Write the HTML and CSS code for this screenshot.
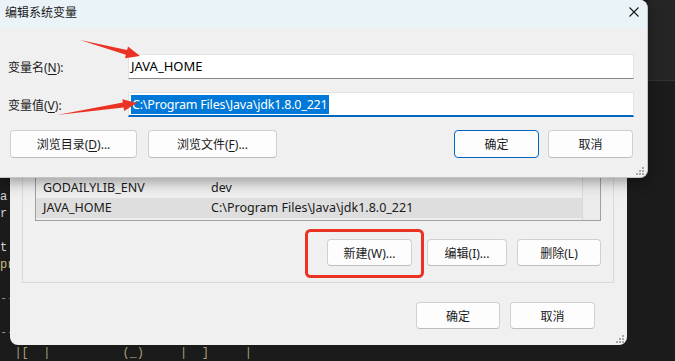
FILE: index.html
```html
<!DOCTYPE html>
<html lang="zh-CN">
<head>
    <meta charset="UTF-8">
    <title>编辑系统变量</title>
    <link rel="stylesheet" href="styles.css">
</head>
<body>
    <div class="desktop">
        <!-- terminal behind the dialogs -->
        <div class="terminal">
            <div class="term-lines">
                <div>a</div>
                <div>r</div>
                <div>&nbsp;</div>
                <div>t</div>
                <div class="yellow">pr</div>
                <div>&nbsp;</div>
                <div class="dim">----</div>
                <div>&nbsp;</div>
                <div class="dim">----</div>
            </div>
            <pre class="term-bottom">  |[  |          (_)     |  ]     |</pre>
        </div>
        <div class="side">
            <div class="side-tabs"></div>
        </div>

        <!-- environment variables window (behind) -->
        <section class="win env-win">
            <div class="group">
                <div class="list">
                    <div class="list-rows">
                        <div class="list-row"><span>GODAILYLIB_ENV</span><span>dev</span></div>
                        <div class="list-row selected"><span>JAVA_HOME</span><span>C:\Program Files\Java\jdk1.8.0_221</span></div>
                    </div>
                    <div class="scroll"></div>
                </div>
                <div class="btn-row">
                    <button class="btn btn-new">新建(W)...</button>
                    <button class="btn btn-edit">编辑(I)...</button>
                    <button class="btn btn-del">删除(L)</button>
                </div>
            </div>
            <div class="footer-row">
                <button class="btn btn-ok">确定</button>
                <button class="btn btn-cancel">取消</button>
            </div>
            <svg class="grip" width="8" height="8" viewBox="0 0 8 8">
                <rect x="6" y="0" width="2" height="2"/>
                <rect x="3" y="3" width="2" height="2"/>
                <rect x="6" y="3" width="2" height="2"/>
                <rect x="0" y="6" width="2" height="2"/>
                <rect x="3" y="6" width="2" height="2"/>
                <rect x="6" y="6" width="2" height="2"/>
            </svg>
        </section>

        <!-- edit system variable dialog (front) -->
        <section class="win edit-win">
            <div class="titlebar">
                <span class="title">编辑系统变量</span>
                <svg class="close" width="10" height="10" viewBox="0 0 10 10">
                    <path d="M0.5 0.5 L9.5 9.5 M9.5 0.5 L0.5 9.5" stroke="#1a1a1a" stroke-width="1.1" fill="none"/>
                </svg>
            </div>
            <div class="form">
                <div class="form-row">
                    <label class="label">变量名(<u>N</u>):</label>
                    <div class="input">JAVA_HOME</div>
                </div>
                <div class="form-row">
                    <label class="label">变量值(<u>V</u>):</label>
                    <div class="input focused"><span class="sel">C:\Program Files\Java\jdk1.8.0_221</span></div>
                </div>
                <div class="dialog-buttons">
                    <button class="btn btn-browse-dir">浏览目录(<u>D</u>)...</button>
                    <button class="btn btn-browse-file">浏览文件(<u>F</u>)...</button>
                    <div class="spacer"></div>
                    <button class="btn btn-default">确定</button>
                    <button class="btn btn-cancel2">取消</button>
                </div>
            </div>
            <svg class="grip" width="8" height="8" viewBox="0 0 8 8">
                <rect x="6" y="0" width="2" height="2"/>
                <rect x="3" y="3" width="2" height="2"/>
                <rect x="6" y="3" width="2" height="2"/>
                <rect x="0" y="6" width="2" height="2"/>
                <rect x="3" y="6" width="2" height="2"/>
                <rect x="6" y="6" width="2" height="2"/>
            </svg>
        </section>

        <!-- red annotations -->
        <svg class="marks" width="675" height="361" viewBox="0 0 675 361">
            <polygon points="80,40 127.1,50 128,46.6 140,56 125,58.2 125.9,54.8" fill="#ea3323"/>
            <polygon points="57,115 122.8,102.6 122.3,99.2 137,103 124.1,111 123.6,107.6" fill="#ea3323"/>
            <rect x="306.5" y="230.5" width="116" height="46" rx="4" fill="none" stroke="#ea3323" stroke-width="3"/>
        </svg>
    </div>
</body>
</html>
```

FILE: styles.css
```css
body {
    margin: 0;
    background: #1b1b1b;
    font-family: "Noto Sans", "Noto Sans CJK SC", sans-serif;
    color: #000;
}

.desktop {
    position: relative;
    width: 675px;
    height: 361px;
    overflow: hidden;
    display: flex;
    background: #1b1b1b;
}

/* Terminal in the background */
.terminal {
    flex: 1;
    display: flex;
    flex-direction: column;
    font-family: "Liberation Mono", monospace;
    font-size: 12px;
    color: #d4d4d4;
}

.term-lines {
    padding-top: 189px;
    line-height: 17px;
}

.term-lines .yellow {
    color: #cdbb7e;
}

.term-lines .dim {
    color: #8a8a8a;
}

.term-bottom {
    margin: auto 0 0 0;
    height: 16px;
    line-height: 16px;
    font-family: "Liberation Mono", monospace;
    font-size: 12px;
    color: #a89f7a;
}

.side {
    width: 27px;
}

.side-tabs {
    height: 80px;
    background: #252526;
    border-bottom: 1px solid #333;
}

/* Shared window styles */
.win {
    position: absolute;
    box-sizing: border-box;
    background: #f0f0f0;
}

.grip {
    position: absolute;
    right: 3px;
    bottom: 2px;
    fill: #a8a8a8;
}

.btn {
    box-sizing: border-box;
    height: 27px;
    background: #fdfdfd;
    border: 1px solid #d0d0d0;
    border-bottom-color: #bdbdbd;
    border-radius: 4px;
    font-family: "Noto Sans", "Noto Sans CJK SC", sans-serif;
    font-size: 12px;
    color: #1a1a1a;
    padding: 0;
}

.btn u {
    text-decoration-thickness: 1px;
    text-underline-offset: 2px;
}

/* Environment variables window */
.env-win {
    left: 10px;
    top: 120px;
    width: 617px;
    height: 225px;
    border-radius: 0 0 8px 8px;
    background: linear-gradient(#e6e6e6, #f0f0f0 40%);
    display: flex;
    flex-direction: column;
    padding: 0 13px 16px 12px;
}

.group {
    flex: 1;
    border: 1px solid #d9d9d9;
    border-top: none;
    padding: 0 12px 16px 12px;
    display: flex;
    flex-direction: column;
}

.list {
    flex: 1;
    display: flex;
    border: 1px solid #a0a0a0;
    background: #eeeeee;
}

.list-rows {
    flex: 1;
    display: flex;
    flex-direction: column;
    justify-content: flex-end;
    padding-bottom: 2px;
}

.list-row {
    display: grid;
    grid-template-columns: 168px 1fr;
    height: 20px;
    line-height: 20px;
    padding-left: 7px;
    font-size: 12.5px;
    color: #1a1a1a;
}

.list-row.selected {
    background: #dedede;
}

.scroll {
    width: 17px;
    background: #ebebeb;
    border-left: 1px solid #d8d8d8;
}

.btn-row {
    margin-top: 18px;
    display: flex;
    justify-content: flex-end;
    gap: 10px;
}

.btn-new {
    width: 85px;
    margin-right: 5px;
}

.btn-edit {
    width: 80px;
}

.btn-del {
    width: 84px;
}

.footer-row {
    margin-top: 19px;
    padding-right: 19px;
    display: flex;
    justify-content: flex-end;
    gap: 10px;
}

.btn-ok {
    width: 84px;
}

.btn-cancel {
    width: 85px;
}

/* Edit system variable dialog */
.edit-win {
    left: 0;
    top: 0;
    width: 648px;
    height: 178px;
    border-right: 1px solid #c4c4c4;
    border-bottom: 1px solid #c4c4c4;
    border-radius: 0 8px 8px 0;
    box-shadow: 0 4px 14px rgba(0, 0, 0, 0.35);
    overflow: hidden;
}

.titlebar {
    height: 28px;
    box-sizing: border-box;
    background: #eaf3f7;
    display: flex;
    align-items: center;
    justify-content: space-between;
    padding: 0 8px 4px 5px;
}

.title {
    font-size: 12px;
    color: #1a1a1a;
}

.close {
    display: block;
}

.form {
    padding: 26px 13px 0 8px;
}

.form-row {
    display: flex;
    align-items: center;
    margin-bottom: 13px;
}

.label {
    width: 120px;
    font-size: 12px;
    color: #1a1a1a;
}

.label u {
    text-underline-offset: 2px;
}

.input {
    flex: 1;
    box-sizing: border-box;
    height: 25px;
    line-height: 23px;
    padding-left: 2px;
    background: #fff;
    border: 1px solid #e3e3e3;
    border-bottom-color: #868686;
    font-size: 13px;
    color: #000;
}

.input.focused {
    border-bottom: 2px solid #0067c0;
    line-height: 22px;
}

.sel {
    display: inline-block;
    line-height: 19px;
    padding: 0 1px;
    background: #0078d7;
    color: #fff;
    font-size: 12.5px;
    letter-spacing: -0.2px;
}

.dialog-buttons {
    margin-top: 5px;
    padding: 0 1px 0 2px;
    display: flex;
    align-items: center;
}

.dialog-buttons .btn {
    height: 28px;
}

.btn-browse-dir {
    width: 127px;
    margin-right: 11px;
}

.btn-browse-file {
    width: 129px;
}

.spacer {
    flex: 1;
}

.btn-default {
    width: 85px;
    margin-right: 9px;
    border: 1px solid #0067c0;
}

.btn-cancel2 {
    width: 85px;
}

/* Annotations on top */
.marks {
    position: absolute;
    left: 0;
    top: 0;
    pointer-events: none;
}
```
